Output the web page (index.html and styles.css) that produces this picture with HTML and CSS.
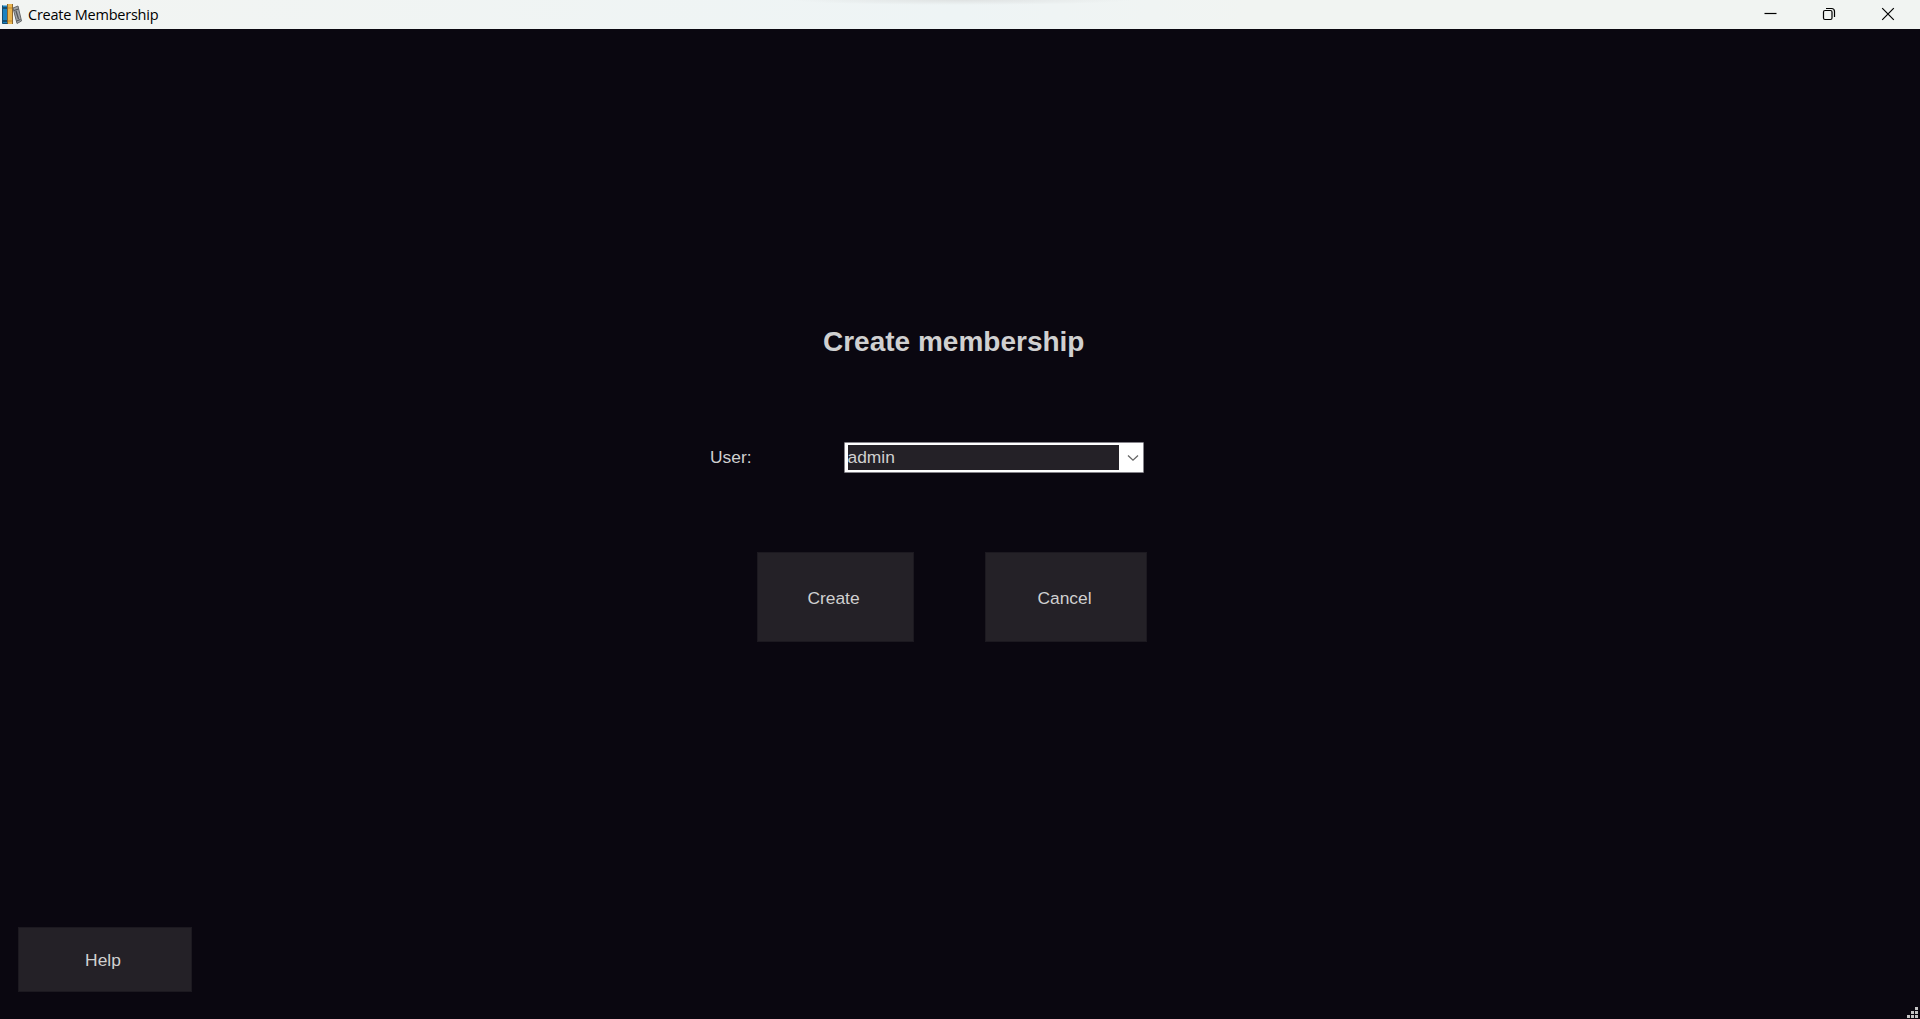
FILE: index.html
```
<!DOCTYPE html>
<html lang="en">
<head>
<meta charset="utf-8">
<title>Create Membership</title>
<link rel="stylesheet" href="styles.css">
</head>
<body>
<header class="titlebar">
  <svg class="app-icon" width="22" height="22" viewBox="0 0 22 22">
    <rect x="2" y="2.500" width="6" height="18" fill="#1b82c0"/>
    <path d="M2 5h6M2 18h6" stroke="#155073" stroke-width="2"/>
    <rect x="7.500" y="1" width="5" height="20" fill="#e9b44e"/>
    <path d="M7.500 1v20M12.500 1v20" stroke="#8b652e"/>
    <path d="M8 5h4M8 18h4" stroke="#c08a30"/>
    <path d="M13 5l5-2 3.500 15-4.500 2.500z" fill="#a3a5a7" stroke="#66686a"/>
    <path d="M14 7.500l4.500-1.500M16.500 18l4-1.500M16 8l2.500 8" stroke="#55585b" stroke-width="1.300"/>
    <path d="M2.500 2.500v18h5" fill="none" stroke="#164c70"/>
  </svg>
  <span class="window-title">Create Membership</span>
  <div class="window-controls">
    <svg width="14" height="14" viewBox="0 0 14 14"><path d="M1.500 6.500h12"/></svg>
    <svg width="14" height="14" viewBox="0 0 14 14"><rect x="1.500" y="3.500" width="8.500" height="9" rx="1.500"/><path d="M4 1.500h5.500q3 0 3 3V10"/></svg>
    <svg width="14" height="14" viewBox="0 0 14 14"><path d="M1.200 1.200l11.600 11.600M12.800 1.200L1.200 12.800"/></svg>
  </div>
</header>
<main class="window">
  <h1 class="heading">Create membership</h1>
  <div class="field">
    <span class="label">User:</span>
    <div class="combo">
      <span class="value">admin</span>
      <svg class="chevron" width="12" height="8" viewBox="0 0 12 8"><path d="M1 1.500l5 4.700 5-4.700"/></svg>
    </div>
  </div>
  <div class="actions">
    <button class="button create"><span>Create</span></button>
    <button class="button cancel"><span>Cancel</span></button>
  </div>
  <footer class="footer">
    <button class="button help"><span>Help</span></button>
    <svg class="grip" width="12" height="12" viewBox="0 0 12 12"><path d="M8 0h3v3H8zM4 4h3v3H4zM8 4h3v3H8zM0 8h3v3H0zM4 8h3v3H4zM8 8h3v3H8z"/></svg>
  </footer>
</main>
</body>
</html>
```
FILE: styles.css
```
* { box-sizing: border-box; }
body {
  margin: 0;
  height: 1019px;
  display: flex;
  flex-direction: column;
  overflow: hidden;
  background: #0a0710;
  color: #d0d0d0;
  font: 17.400px/20px "Liberation Sans", Arial, sans-serif;
}
.titlebar {
  height: 29px;
  flex: none;
  display: flex;
  align-items: center;
  background:
    radial-gradient(ellipse 170px 5px at 961px 0, #dfe2e2, transparent),
    linear-gradient(90deg, #f2f4f2, #eef4f5 50%, #f1f4f2 65%);
  color: #000;
}
.app-icon { margin: 0 0 1px 0; }
.window-title {
  margin-left: 6px;
  font: 14.500px/20px "Open Sans", "Noto Sans", sans-serif;
  letter-spacing: -0.230px;
}
.window-controls {
  display: flex;
  gap: 45px;
  margin: 0 25px 1px auto;
}
.window-controls svg { fill: none; stroke: #000; stroke-width: 1.200; }
.window {
  flex: 1;
  display: flex;
  flex-direction: column;
}
.heading {
  margin: 297px 0 0 823px;
  font-size: 28px;
  line-height: 32px;
}
.field {
  display: flex;
  align-items: flex-start;
  margin: 84px 0 0 710px;
}
.label { width: 134px; padding-top: 5px; }
.combo {
  width: 300px;
  height: 31px;
  display: flex;
  align-items: center;
  padding: 0 0 0 3px;
  background: #fff;
  border: 1px solid #85838a;
  border-radius: 1px;
}
.value {
  width: 271px;
  height: 25px;
  line-height: 24px;
  background: #242127;
  text-indent: -0.500px;
}
.chevron { margin-left: 8px; fill: none; stroke: #666; stroke-width: 1.300; }
.actions {
  display: flex;
  gap: 71px;
  margin: 79px 0 0 757px;
}
.button {
  padding: 0;
  font: inherit;
  color: inherit;
  background: #242127;
  border: 1px solid #1c1920;
}
.create { width: 157px; height: 90px; padding-right: 4px; }
.cancel { width: 162px; height: 90px; padding-right: 3px; }
.create, .cancel { padding-top: 1px; }
.help { width: 174px; height: 65px; padding-right: 4px; margin-bottom: 27px; }
.footer {
  display: flex;
  align-items: flex-end;
  justify-content: space-between;
  margin: auto 0 0 18px;
}
.grip { margin: 0 1px 0 0; fill: #c4c4c4; }
```
